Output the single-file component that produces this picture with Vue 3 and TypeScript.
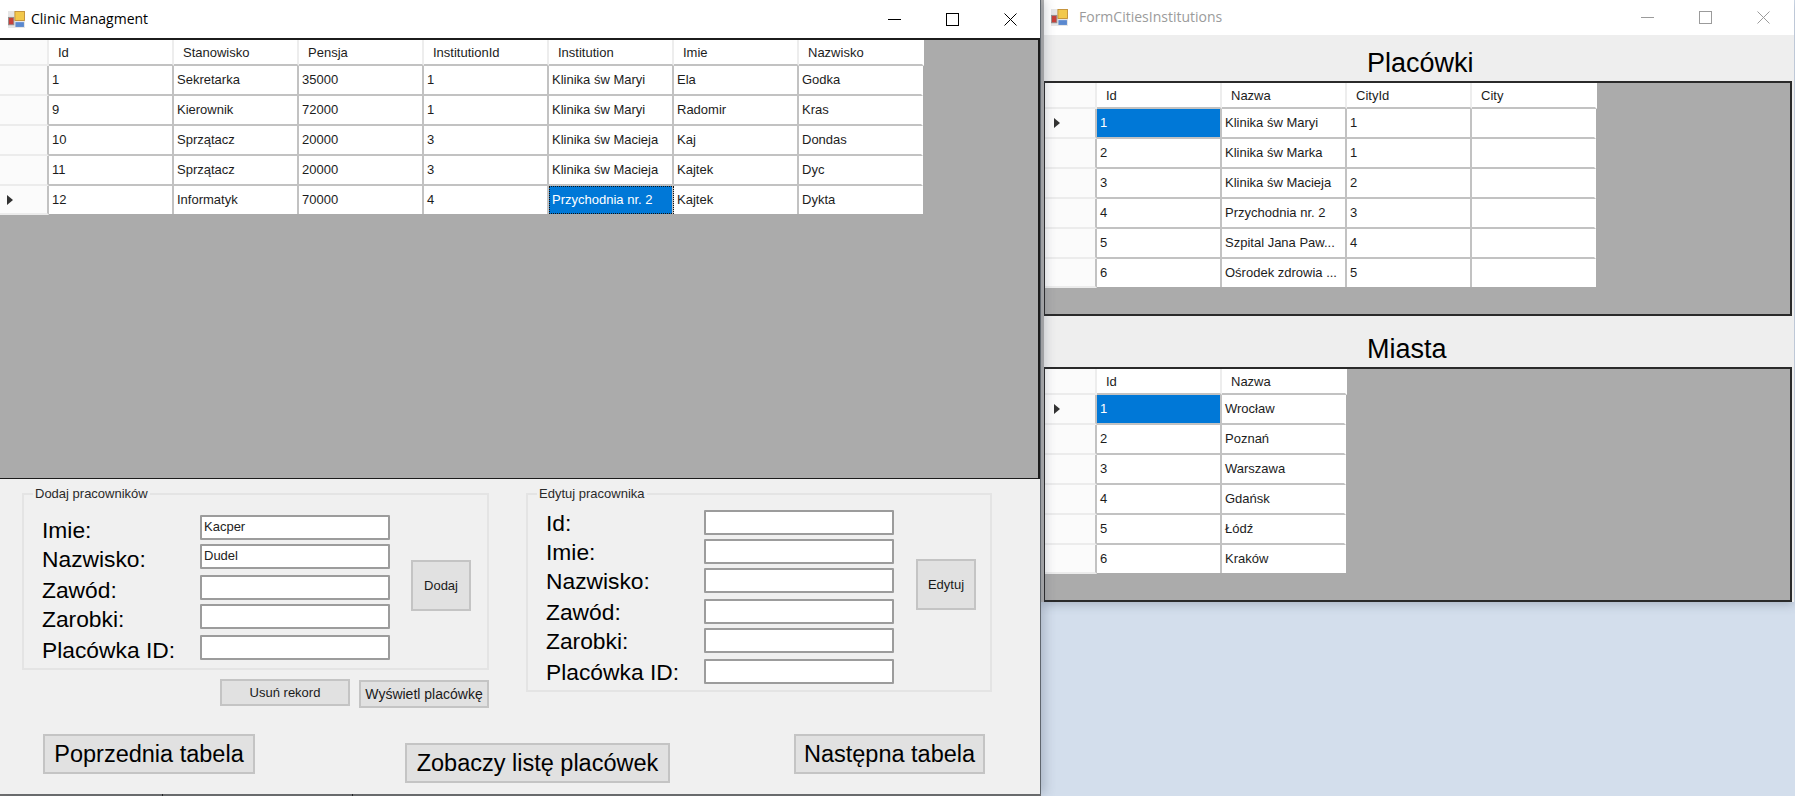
<script setup lang="ts">
interface GridData {
  title?: string
  columns: string[]
  rows: string[][]
  activeRow: number
  activeCol: number
}

interface Field {
  label: string
  value?: string
  loose?: boolean
}

const employees: GridData = {
  columns: ['Id', 'Stanowisko', 'Pensja', 'InstitutionId', 'Institution', 'Imie', 'Nazwisko'],
  rows: [
    ['1', 'Sekretarka', '35000', '1', 'Klinika św Maryi', 'Ela', 'Godka'],
    ['9', 'Kierownik', '72000', '1', 'Klinika św Maryi', 'Radomir', 'Kras'],
    ['10', 'Sprzątacz', '20000', '3', 'Klinika św Macieja', 'Kaj', 'Dondas'],
    ['11', 'Sprzątacz', '20000', '3', 'Klinika św Macieja', 'Kajtek', 'Dyc'],
    ['12', 'Informatyk', '70000', '4', 'Przychodnia nr. 2', 'Kajtek', 'Dykta'],
  ],
  activeRow: 4,
  activeCol: 4,
};

const sideGrids: GridData[] = [
  {
    title: 'Placówki',
    columns: ['Id', 'Nazwa', 'CityId', 'City'],
    rows: [
      ['1', 'Klinika św Maryi', '1', ''],
      ['2', 'Klinika św Marka', '1', ''],
      ['3', 'Klinika św Macieja', '2', ''],
      ['4', 'Przychodnia nr. 2', '3', ''],
      ['5', 'Szpital Jana Paw...', '4', ''],
      ['6', 'Ośrodek zdrowia ...', '5', ''],
    ],
    activeRow: 0,
    activeCol: 0,
  },
  {
    title: 'Miasta',
    columns: ['Id', 'Nazwa'],
    rows: [
      ['1', 'Wrocław'],
      ['2', 'Poznań'],
      ['3', 'Warszawa'],
      ['4', 'Gdańsk'],
      ['5', 'Łódź'],
      ['6', 'Kraków'],
    ],
    activeRow: 0,
    activeCol: 0,
  },
];

const addFields: Field[] = [
  { label: 'Imie:', value: 'Kacper' },
  { label: 'Nazwisko:', value: 'Dudel' },
  { label: 'Zawód:', loose: true },
  { label: 'Zarobki:' },
  { label: 'Placówka ID:', loose: true },
];

const editFields: Field[] = [
  { label: 'Id:' },
  { label: 'Imie:' },
  { label: 'Nazwisko:' },
  { label: 'Zawód:', loose: true },
  { label: 'Zarobki:' },
  { label: 'Placówka ID:', loose: true },
];
</script>

<template>
  <div class="desktop">
    <div class="behind">
      <span class="behind-cell first">Placówka ID:</span>
      <span class="behind-cell second"></span>
    </div>

    <section class="window main-window">
      <header class="titlebar main-bar">
        <svg class="app-icon" viewBox="0 0 16 16">
          <rect x="0" y="0" width="16" height="16" fill="#e6e6e6" />
          <rect x="6.5" y="0.5" width="9" height="8.5" fill="#f2c84b" stroke="#c08a2e" stroke-width="0.8" />
          <rect x="0.5" y="6" width="5" height="7" fill="#c8403a" stroke="#8f8f8f" stroke-width="0.8" />
          <rect x="7" y="10.5" width="8" height="4.5" fill="#5a88cf" />
        </svg>
        <span class="title">Clinic Managment</span>
        <div class="controls">
          <span class="ctrl"><i class="ctrl-min"></i></span>
          <span class="ctrl"><i class="ctrl-max"></i></span>
          <span class="ctrl">
            <svg class="ctrl-close" viewBox="0 0 13 13"><path d="M0.5 0.5 12.5 12.5M12.5 0.5 0.5 12.5" /></svg>
          </span>
        </div>
      </header>

      <div class="grid main-grid">
        <div class="grid-row head">
          <span class="rh"></span>
          <span v-for="col in employees.columns" :key="col" class="cell">{{ col }}</span>
        </div>
        <div v-for="(row, r) in employees.rows" :key="r" class="grid-row">
          <span class="rh"><i v-if="r === employees.activeRow" class="arrow"></i></span>
          <span
            v-for="(val, c) in row"
            :key="c"
            :class="['cell', { active: r === employees.activeRow && c === employees.activeCol }]"
          >{{ val }}</span>
        </div>
      </div>

      <div class="panel">
        <div class="forms">
          <div class="left-col">
            <fieldset class="group add-group">
              <legend>Dodaj pracowników</legend>
              <div class="group-body">
                <div class="fields">
                  <div v-for="f in addFields" :key="f.label" :class="['field', { loose: f.loose }]">
                    <label>{{ f.label }}</label>
                    <input type="text" :value="f.value ?? ''" readonly />
                  </div>
                </div>
                <button class="btn action">Dodaj</button>
              </div>
            </fieldset>
            <div class="row-actions">
              <button class="btn remove">Usuń rekord</button>
              <button class="btn show">Wyświetl placówkę</button>
            </div>
          </div>

          <fieldset class="group edit-group">
            <legend>Edytuj pracownika</legend>
            <div class="group-body">
              <div class="fields">
                <div v-for="f in editFields" :key="f.label" :class="['field', { loose: f.loose }]">
                  <label>{{ f.label }}</label>
                  <input type="text" value="" readonly />
                </div>
              </div>
              <button class="btn action">Edytuj</button>
            </div>
          </fieldset>
        </div>

        <div class="nav">
          <button class="btn big prev">Poprzednia tabela</button>
          <button class="btn big list">Zobaczy listę placówek</button>
          <button class="btn big next">Następna tabela</button>
        </div>
      </div>
    </section>

    <section class="window side-window">
      <header class="titlebar side-bar">
        <svg class="app-icon" viewBox="0 0 16 16">
          <rect x="0" y="0" width="16" height="16" fill="#e6e6e6" />
          <rect x="6.5" y="0.5" width="9" height="8.5" fill="#f2c84b" stroke="#c08a2e" stroke-width="0.8" />
          <rect x="0.5" y="6" width="5" height="7" fill="#c8403a" stroke="#8f8f8f" stroke-width="0.8" />
          <rect x="7" y="10.5" width="8" height="4.5" fill="#5a88cf" />
        </svg>
        <span class="title">FormCitiesInstitutions</span>
        <div class="controls">
          <span class="ctrl"><i class="ctrl-min"></i></span>
          <span class="ctrl"><i class="ctrl-max"></i></span>
          <span class="ctrl">
            <svg class="ctrl-close" viewBox="0 0 13 13"><path d="M0.5 0.5 12.5 12.5M12.5 0.5 0.5 12.5" /></svg>
          </span>
        </div>
      </header>

      <template v-for="g in sideGrids" :key="g.title">
        <h2 class="side-title">{{ g.title }}</h2>
        <div class="grid side-grid">
          <div class="grid-row head">
            <span class="rh"></span>
            <span v-for="col in g.columns" :key="col" class="cell">{{ col }}</span>
          </div>
          <div v-for="(row, r) in g.rows" :key="r" class="grid-row">
            <span class="rh"><i v-if="r === g.activeRow" class="arrow"></i></span>
            <span
              v-for="(val, c) in row"
              :key="c"
              :class="['cell', { active: r === g.activeRow && c === g.activeCol }]"
            >{{ val }}</span>
          </div>
        </div>
      </template>
    </section>
  </div>
</template>

<style scoped>
.desktop {
  position: relative;
  width: 1795px;
  height: 796px;
  overflow: hidden;
  background: #d3deec;
  font-family: "Liberation Sans", Arial, sans-serif;
  color: #000;
}

/* the window lying under the main one, only 2px of it shows */
.behind {
  position: absolute;
  left: 0;
  top: 794px;
  width: 1041px;
  height: 2px;
  display: flex;
  overflow: hidden;
  background: #6f6f6f;
}
.behind-cell {
  height: 2px;
  border-right: 1px solid #222;
}
.behind-cell.first {
  width: 163px;
  padding-left: 8px;
  box-sizing: border-box;
  font-size: 22px;
  line-height: 26px;
  color: #111;
}
.behind-cell.second {
  width: 189px;
}

.window {
  position: absolute;
  top: 0;
  box-sizing: border-box;
  background: #f0f0f0;
}
.main-window {
  left: 0;
  width: 1041px;
  height: 794px;
  border-right: 1px solid #5f666d;
  box-shadow: 4px 0 10px rgba(60, 70, 90, 0.25);
  z-index: 2;
}
.side-window {
  left: 1041px;
  width: 753px;
  height: 602px;
  border-left: 3px solid #b4b4b4;
  box-shadow: 0 2px 10px rgba(60, 70, 90, 0.3);
  background: #eeeeee;
  z-index: 1;
}

.titlebar {
  display: flex;
  align-items: center;
  background: #fff;
}
.main-bar {
  height: 38px;
  padding-left: 8px;
}
.side-bar {
  height: 35px;
  padding-left: 7px;
  color: #9b9b9b;
}
.app-icon {
  width: 17px;
  height: 17px;
  flex: none;
}
.title {
  margin-left: 6px;
  padding-bottom: 2px;
  font-family: "Open Sans", "Noto Sans", sans-serif;
  font-size: 14px;
}
.side-bar .title {
  margin-left: 11px;
}
.controls {
  display: flex;
  margin-left: auto;
  padding-right: 1px;
}
.ctrl {
  width: 58px;
  display: flex;
  align-items: center;
  justify-content: center;
}
.ctrl-min {
  width: 13px;
  border-top: 1px solid #000;
}
.ctrl-max {
  width: 13px;
  height: 13px;
  box-sizing: border-box;
  border: 1px solid #000;
}
.ctrl-close {
  width: 13px;
  height: 13px;
  fill: none;
  stroke: #000;
  stroke-width: 1;
}
.side-bar .ctrl-min,
.side-bar .ctrl-max {
  border-color: #9b9b9b;
}
.side-bar .ctrl-close {
  stroke: #9b9b9b;
}
.side-bar .controls {
  padding-right: 2px;
}

.grid {
  box-sizing: border-box;
  background: #ababab;
  font-size: 13px;
  color: #1c1c1c;
}
.main-grid {
  height: 441px;
  border-top: 2px solid #1c1c1c;
  border-bottom: 1px solid #1c1c1c;
  border-right: 2px solid #1c1c1c;
}
.side-grid {
  height: 235px;
  width: 748px;
  border: 2px solid #2a2a2a;
  border-left-width: 1px;
}

.grid-row {
  display: flex;
  height: 30px;
}
.grid-row.head {
  height: 26px;
}
.grid-row:last-child {
  height: 28px;
}

.rh {
  flex: none;
  box-sizing: border-box;
  display: flex;
  align-items: center;
  height: 100%;
  background: #fbfbfb;
  border-right: 2px solid #c2c2c2;
  border-bottom: 2px solid #ececec;
}
.main-grid .rh {
  width: 49px;
  padding-left: 7px;
}
.side-grid .rh {
  width: 52px;
  padding-left: 9px;
}
.grid-row:last-child .rh {
  height: 29px;
}
.grid-row.head .rh {
  border-right-color: #ededed;
}

.cell {
  flex: none;
  box-sizing: border-box;
  width: 125px;
  height: 100%;
  padding-left: 3px;
  line-height: 28px;
  white-space: nowrap;
  overflow: hidden;
  background: #fff;
  border-right: 2px solid #c2c2c2;
  border-bottom: 2px solid #c2c2c2;
}
.grid-row:last-child .cell {
  border-bottom: 0;
}
.grid-row .cell:last-child {
  border-right-color: #fff;
  width: 124px;
}
.head .cell {
  padding-left: 9px;
  line-height: 26px;
  border-right-color: #ededed;
  border-bottom-color: #c2c2c2;
}
.head .cell:last-child {
  width: 125px;
}
.cell.active {
  background: #0078d7;
  color: #fff;
}
.main-grid .cell.active {
  outline: 1px dotted #111;
  outline-offset: -1px;
}

.arrow {
  width: 0;
  height: 0;
  border-left: 6px solid #333;
  border-top: 5px solid transparent;
  border-bottom: 5px solid transparent;
}

.panel {
  padding-top: 7px;
}
.forms {
  display: flex;
  align-items: flex-start;
  padding-left: 22px;
  gap: 37px;
}
.left-col {
  width: 467px;
}

.group {
  box-sizing: border-box;
  margin: 0;
  padding: 0;
  border: 2px solid #e4e4e4;
  min-width: 0;
}
.group legend {
  margin-left: 9px;
  padding: 0 2px;
  font-size: 13px;
  line-height: 15px;
  color: #2a2a2a;
}
.add-group {
  width: 467px;
  height: 184px;
}
.edit-group {
  width: 466px;
  height: 206px;
}

.group-body {
  display: flex;
  align-items: flex-start;
  padding-left: 18px;
}
.add-group .group-body {
  padding-top: 14px;
}
.edit-group .group-body {
  padding-top: 9px;
}

.field {
  display: flex;
  height: 25px;
  margin-top: 4px;
}
.field:first-child {
  margin-top: 0;
}
.field.loose {
  margin-top: 6px;
}
.field label {
  width: 158px;
  font-size: 22.8px;
  line-height: 26px;
}
.add-group label {
  padding-top: 2px;
}
.edit-group label {
  padding-top: 0;
}
.field input {
  box-sizing: border-box;
  width: 190px;
  height: 25px;
  padding: 0 0 2px 2px;
  border: 2px solid #9c9c9c;
  border-radius: 1px;
  outline: none;
  background: #fff;
  font-family: inherit;
  font-size: 13px;
  color: #222;
}

.btn {
  box-sizing: border-box;
  padding: 0;
  background: #e1e1e1;
  border: 2px solid #c4c4c4;
  font-family: inherit;
  color: #1a1a1a;
}
.action {
  width: 60px;
  height: 51px;
  font-size: 13px;
}
.add-group .action {
  margin: 45px 0 0 21px;
}
.edit-group .action {
  margin: 49px 0 0 22px;
}

.row-actions {
  display: flex;
  justify-content: flex-end;
  align-items: flex-start;
  gap: 9px;
  margin-top: 9px;
}
.remove {
  width: 130px;
  height: 27px;
  font-size: 13px;
}
.show {
  width: 130px;
  height: 28px;
  margin-top: 1px;
  font-size: 14px;
}

.nav {
  display: flex;
  align-items: flex-start;
  padding: 0 55px 0 43px;
  margin-top: 26px;
}
.big {
  height: 40px;
  font-size: 23.5px;
  color: #000;
}
.prev {
  width: 212px;
}
.list {
  width: 265px;
  margin: 9px 0 0 150px;
}
.next {
  width: 191px;
  margin-left: auto;
}

.side-title {
  box-sizing: border-box;
  margin: 0;
  padding: 0 0 3px 323px;
  font-size: 27px;
  font-weight: 400;
  line-height: 30px;
  color: #000;
  display: flex;
  align-items: flex-end;
}
.side-bar + .side-title {
  height: 46px;
}
.side-grid + .side-title {
  height: 51px;
}
</style>
